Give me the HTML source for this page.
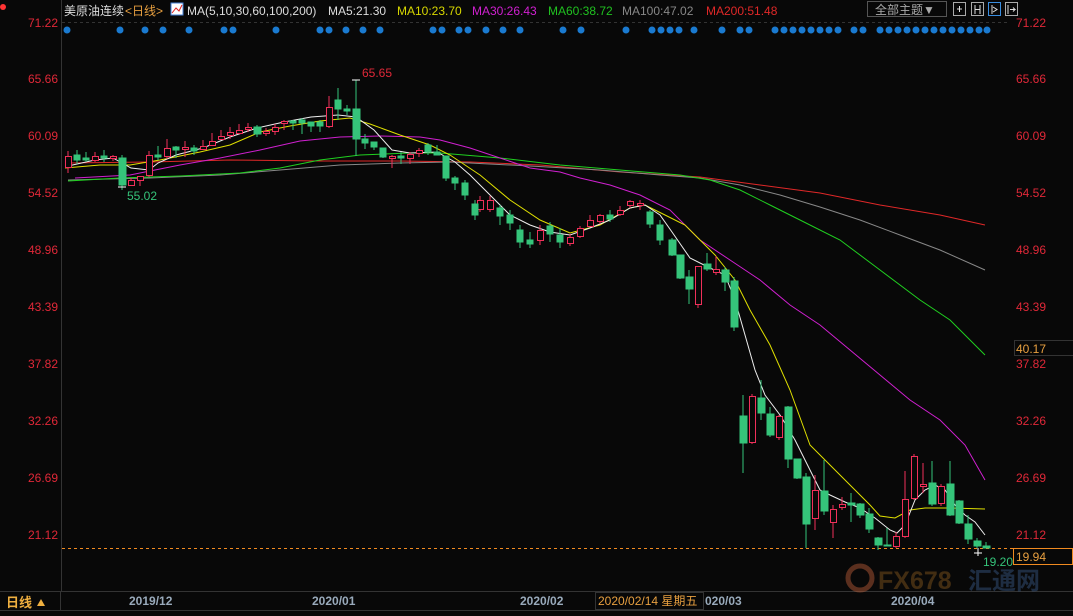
<!DOCTYPE html><html><head><meta charset="utf-8"><style>
body{margin:0;background:#080808;width:1073px;height:616px;overflow:hidden;font-family:"Liberation Sans","Noto Sans CJK SC",sans-serif}
svg{display:block}
</style></head><body>
<svg width="1073" height="616" xmlns="http://www.w3.org/2000/svg" font-family="Liberation Sans, Noto Sans CJK SC, sans-serif">
<rect width="1073" height="616" fill="#080808"/>
<line x1="61.5" y1="0" x2="61.5" y2="591" stroke="#333"/>
<line x1="0" y1="591.5" x2="1073" y2="591.5" stroke="#333"/>
<line x1="0" y1="610.5" x2="1073" y2="610.5" stroke="#333"/>
<line x1="62" y1="22.5" x2="1010" y2="22.5" stroke="#333" stroke-dasharray="3,3"/>
<circle cx="3" cy="7" r="3" fill="#f33"/>
<text x="64" y="15" font-size="12" fill="#ddd">美原油连续</text>
<text x="125" y="15" font-size="12" fill="#e8a040">&lt;日线&gt;</text>
<rect x="171" y="3" width="12" height="12" fill="#fff" stroke="#4682d8"/>
<polyline points="172,13 176,8 179,11 182,5" fill="none" stroke="#d22" stroke-width="1"/>
<text x="187" y="15" font-size="12" fill="#ddd">MA(5,10,30,60,100,200)</text>
<text x="328" y="15" font-size="12" fill="#ddd">MA5:21.30</text>
<text x="397" y="15" font-size="12" fill="#d8d800">MA10:23.70</text>
<text x="472" y="15" font-size="12" fill="#d020d0">MA30:26.43</text>
<text x="548" y="15" font-size="12" fill="#20c020">MA60:38.72</text>
<text x="622" y="15" font-size="12" fill="#888">MA100:47.02</text>
<text x="706" y="15" font-size="12" fill="#e02828">MA200:51.48</text>
<rect x="867.5" y="1.5" width="79" height="15" fill="none" stroke="#555"/>
<text x="875" y="14" font-size="12" fill="#aaa">全部主题▼</text>
<rect x="953.5" y="2.5" width="12" height="13" fill="none" stroke="#aaa"/>
<rect x="971.5" y="2.5" width="12" height="13" fill="none" stroke="#aaa"/>
<rect x="988.5" y="2.5" width="12" height="13" fill="none" stroke="#3a8ee0"/>
<rect x="1005.5" y="2.5" width="12" height="13" fill="none" stroke="#aaa"/>
<path d="M957 9h5M959.5 6v6M975 5v9M980 5v9M975 9.5h5M992 5v9M993 7l4 2.5-4 2.5M1008 5v9M1010 9.5h5l-2-2M1015 9.5l-2 2" stroke="#ddd" fill="none"/>
<g font-size="12" fill="#e02838" text-anchor="end">
<text x="58" y="27">71.22</text><text x="58" y="83">65.66</text><text x="58" y="140">60.09</text><text x="58" y="197">54.52</text><text x="58" y="254">48.96</text><text x="58" y="311">43.39</text><text x="58" y="368">37.82</text><text x="58" y="425">32.26</text><text x="58" y="482">26.69</text><text x="58" y="539">21.12</text>
</g>
<g font-size="12" fill="#e02838">
<text x="1016" y="27">71.22</text><text x="1016" y="83">65.66</text><text x="1016" y="140">60.09</text><text x="1016" y="197">54.52</text><text x="1016" y="254">48.96</text><text x="1016" y="311">43.39</text><text x="1016" y="368">37.82</text><text x="1016" y="425">32.26</text><text x="1016" y="482">26.69</text><text x="1016" y="539">21.12</text>
</g>
<rect x="1014.5" y="340.5" width="59" height="15" fill="#080808" stroke="#333"/>
<text x="1016" y="353" font-size="12" fill="#e8a040">40.17</text>
<line x1="62" y1="548.5" x2="1013" y2="548.5" stroke="#f08a20" stroke-dasharray="3,3"/>
<rect x="1013.5" y="548.5" width="59" height="16" fill="#080808" stroke="#f08a20"/>
<text x="1016" y="561" font-size="12" fill="#e8a040">19.94</text>
<g fill="#1a7ad0">
<circle cx="67" cy="30" r="3.5"/><circle cx="120" cy="30" r="3.5"/><circle cx="145" cy="30" r="3.5"/><circle cx="163" cy="30" r="3.5"/><circle cx="189" cy="30" r="3.5"/><circle cx="224" cy="30" r="3.5"/><circle cx="233" cy="30" r="3.5"/><circle cx="276" cy="30" r="3.5"/><circle cx="320" cy="30" r="3.5"/><circle cx="329" cy="30" r="3.5"/><circle cx="346" cy="30" r="3.5"/><circle cx="363" cy="30" r="3.5"/><circle cx="380" cy="30" r="3.5"/><circle cx="433" cy="30" r="3.5"/><circle cx="442" cy="30" r="3.5"/><circle cx="459" cy="30" r="3.5"/><circle cx="468" cy="30" r="3.5"/><circle cx="486" cy="30" r="3.5"/><circle cx="503" cy="30" r="3.5"/><circle cx="520" cy="30" r="3.5"/>
<circle cx="563" cy="30" r="3.5"/><circle cx="581" cy="30" r="3.5"/><circle cx="626" cy="30" r="3.5"/><circle cx="652" cy="30" r="3.5"/><circle cx="661" cy="30" r="3.5"/><circle cx="670" cy="30" r="3.5"/><circle cx="679" cy="30" r="3.5"/><circle cx="694" cy="30" r="3.5"/><circle cx="722" cy="30" r="3.5"/><circle cx="740" cy="30" r="3.5"/><circle cx="749" cy="30" r="3.5"/>
<circle cx="775" cy="30" r="3.5"/><circle cx="784" cy="30" r="3.5"/><circle cx="793" cy="30" r="3.5"/><circle cx="802" cy="30" r="3.5"/><circle cx="811" cy="30" r="3.5"/><circle cx="820" cy="30" r="3.5"/><circle cx="829" cy="30" r="3.5"/><circle cx="838" cy="30" r="3.5"/><circle cx="854" cy="30" r="3.5"/><circle cx="863" cy="30" r="3.5"/>
<circle cx="880" cy="30" r="3.5"/><circle cx="889" cy="30" r="3.5"/><circle cx="898" cy="30" r="3.5"/><circle cx="907" cy="30" r="3.5"/><circle cx="916" cy="30" r="3.5"/><circle cx="925" cy="30" r="3.5"/><circle cx="934" cy="30" r="3.5"/><circle cx="943" cy="30" r="3.5"/><circle cx="952" cy="30" r="3.5"/><circle cx="961" cy="30" r="3.5"/><circle cx="970" cy="30" r="3.5"/><circle cx="979" cy="30" r="3.5"/><circle cx="987" cy="30" r="3.5"/>
</g>
<g fill="none" stroke-width="1">
<polyline stroke="#e02828" points="68,163 150,162 230,160 320,161 400,161 470,162 540,165 620,172 700,177 760,185 820,193 880,205 940,215 985,225"/>
<polyline stroke="#888" points="68,180 150,178 220,175 280,170 340,165 400,163 450,162 530,166 600,170 660,175 700,178 740,185 780,195 820,207 860,220 900,235 940,250 985,270"/>
<polyline stroke="#20d020" points="68,181 120,178 180,176 240,173 280,168 320,160 360,155 410,153 440,153 500,158 560,165 620,170 680,175 710,180 740,190 770,205 800,220 840,240 880,270 920,300 950,320 985,355"/>
<polyline stroke="#d020d0" points="75,178 130,175 180,165 220,158 260,150 300,141 340,137 380,136 420,137 440,140 470,148 500,158 530,168 560,172 580,178 610,185 640,195 670,210 700,240 730,260 760,280 790,305 820,325 850,350 880,375 910,400 940,420 965,445 985,480"/>
<polyline stroke="#e0e000" points="65,168 100,165 130,165 160,160 200,152 230,145 260,132 290,126 320,121 350,118 370,124 400,135 430,145 450,155 480,175 510,200 540,220 570,233 600,225 630,208 645,205 665,215 685,225 700,240 715,255 735,280 750,310 770,345 790,390 810,445 825,460 840,475 855,490 870,505 880,516 895,518 910,510 925,508 950,508 985,509"/>
<polyline stroke="#eee" points="68,166 95,160 113,158 131,168 149,170 158,163 176,155 203,148 230,137 257,128 284,122 311,117 338,115 356,117 374,130 392,150 410,153 437,152 455,162 470,175 490,195 510,215 530,225 550,232 570,235 590,228 610,220 630,208 645,205 660,215 672,232 690,258 708,267 725,275 735,300 745,335 755,370 765,395 780,415 795,440 810,470 820,490 830,495 845,502 860,508 875,518 890,530 897,533 905,525 915,500 925,490 935,485 945,490 955,505 965,515 975,522 985,535"/>
</g>
<g stroke="#f0305a" fill="#080808" stroke-width="1">
<path d="M68 151v22M95 152v10M113 155v6M131 178v8M140 176v10M149 151v26M167 139v20M185 141v16M203 140v9M212 133v13M221 130v10M230 127v12M239 124v10M248 123v9M266 128v8M275 124v11M284 120v10M329 96v32M392 155v13M410 152v12M419 148v9M480 196v16M490 196v16M540 225v20M570 234v12M580 226v12M590 215v12M600 214v10M620 206v10M630 200v8M640 200v10M698 266v42M716 256v19M752 394v50M779 415v25M815 475v55M833 505v33M842 497v13M896 532v16M905 471v67M914 454v46M923 463v30M941 484v22"/>
<rect x="65.5" y="156.5" width="6" height="11"/><rect x="92.5" y="156.5" width="6" height="4"/><rect x="110.5" y="156.5" width="6" height="2"/><rect x="128.5" y="180.5" width="6" height="5"/><rect x="137.5" y="176.5" width="6" height="4"/><rect x="146.5" y="155.5" width="6" height="20"/><rect x="164.5" y="148.5" width="6" height="8"/><rect x="182.5" y="147.5" width="6" height="2"/><rect x="200.5" y="146.5" width="6" height="3"/><rect x="209.5" y="141.5" width="6" height="4"/><rect x="218.5" y="136.5" width="6" height="3"/><rect x="227.5" y="132.5" width="6" height="3"/><rect x="236.5" y="130.5" width="6" height="3"/><rect x="245.5" y="127.5" width="6" height="2"/><rect x="263.5" y="131.5" width="6" height="2"/><rect x="272.5" y="127.5" width="6" height="4"/><rect x="281.5" y="121.5" width="6" height="2"/><rect x="326.5" y="107.5" width="6" height="19"/><rect x="389.5" y="156.5" width="6" height="2"/><rect x="407.5" y="154.5" width="6" height="4"/><rect x="416.5" y="150.5" width="6" height="3"/><rect x="477.5" y="200.5" width="6" height="9"/><rect x="487.5" y="200.5" width="6" height="9"/><rect x="537.5" y="230.5" width="6" height="10"/><rect x="567.5" y="237.5" width="6" height="6"/><rect x="577.5" y="228.5" width="6" height="8"/><rect x="587.5" y="220.5" width="6" height="6"/><rect x="597.5" y="215.5" width="6" height="6"/><rect x="617.5" y="210.5" width="6" height="4"/><rect x="627.5" y="201.5" width="6" height="4"/><rect x="637.5" y="203.5" width="6" height="2"/><rect x="695.5" y="266.5" width="6" height="38"/><rect x="713.5" y="269.5" width="6" height="3"/><rect x="749.5" y="396.5" width="6" height="46"/><rect x="776.5" y="416.5" width="6" height="21"/><rect x="812.5" y="490.5" width="6" height="28"/><rect x="830.5" y="509.5" width="6" height="13"/><rect x="839.5" y="504.5" width="6" height="3"/><rect x="893.5" y="536.5" width="6" height="10"/><rect x="902.5" y="499.5" width="6" height="37"/><rect x="911.5" y="456.5" width="6" height="42"/><rect x="920.5" y="484.5" width="6" height="2"/><rect x="938.5" y="486.5" width="6" height="17"/>
</g>
<g stroke="#35c47a" fill="#35c47a" stroke-width="1">
<path d="M77 150v14M86 152v10M104 150v12M122 155v35M158 146v14M176 146v12M194 145v10M257 125v12M293 120v10M302 118v16M311 122v10M320 120v12M338 88v32M347 105v10M356 80v76M365 134v15M374 142v8M383 148v10M401 152v12M428 143v12M437 145v10M446 156v25M455 176v14M465 180v20M475 200v20M500 205v20M510 210v20M520 225v23M530 232v16M550 222v20M560 228v20M610 210v12M650 210v18M660 220v25M672 238v18M680 255v24M689 270v34M707 253v18M725 267v24M734 277v54M743 395v78M761 380v40M770 407v30M788 406v62M797 459v20M806 473v75M824 460v55M851 493v29M860 503v15M869 508v25M878 537v13M887 528v18M932 461v45M950 461v55M959 500v24M968 515v29M977 538v10M986 542v6"/>
<rect x="74" y="155" width="6" height="5"/><rect x="83" y="158" width="6" height="2"/><rect x="101" y="156" width="6" height="2"/><rect x="119" y="158" width="7" height="27"/><rect x="155" y="155" width="6" height="2"/><rect x="173" y="147" width="6" height="3"/><rect x="191" y="148" width="6" height="3"/><rect x="254" y="127" width="7" height="7"/><rect x="290" y="121" width="6" height="2"/><rect x="299" y="120" width="6" height="3"/><rect x="308" y="122" width="6" height="4"/><rect x="317" y="122" width="6" height="4"/><rect x="335" y="100" width="6" height="9"/><rect x="344" y="109" width="6" height="2"/><rect x="353" y="109" width="7" height="30"/><rect x="362" y="139" width="6" height="4"/><rect x="371" y="142" width="6" height="5"/><rect x="380" y="148" width="6" height="9"/><rect x="398" y="156" width="6" height="2"/><rect x="425" y="145" width="6" height="7"/><rect x="434" y="152" width="6" height="3"/><rect x="443" y="156" width="6" height="22"/><rect x="452" y="178" width="6" height="5"/><rect x="462" y="183" width="6" height="12"/><rect x="472" y="204" width="6" height="11"/><rect x="497" y="208" width="6" height="8"/><rect x="507" y="215" width="6" height="8"/><rect x="517" y="230" width="6" height="12"/><rect x="527" y="240" width="6" height="4"/><rect x="547" y="226" width="6" height="8"/><rect x="557" y="235" width="6" height="7"/><rect x="607" y="215" width="6" height="4"/><rect x="647" y="212" width="6" height="12"/><rect x="657" y="225" width="6" height="15"/><rect x="669" y="240" width="7" height="15"/><rect x="677" y="255" width="7" height="23"/><rect x="686" y="277" width="7" height="12"/><rect x="704" y="264" width="7" height="5"/><rect x="722" y="270" width="7" height="12"/><rect x="731" y="281" width="7" height="46"/><rect x="740" y="416" width="7" height="27"/><rect x="758" y="398" width="7" height="15"/><rect x="767" y="414" width="7" height="21"/><rect x="785" y="407" width="7" height="52"/><rect x="794" y="459" width="7" height="19"/><rect x="803" y="477" width="7" height="47"/><rect x="821" y="491" width="7" height="20"/><rect x="848" y="503" width="7" height="2"/><rect x="857" y="504" width="7" height="11"/><rect x="866" y="514" width="7" height="15"/><rect x="875" y="538" width="7" height="7"/><rect x="884" y="545" width="7" height="1"/><rect x="929" y="483" width="7" height="21"/><rect x="947" y="484" width="7" height="31"/><rect x="956" y="501" width="7" height="22"/><rect x="965" y="524" width="7" height="15"/><rect x="974" y="541" width="7" height="5"/><rect x="983" y="546" width="7" height="2"/>
</g>
<path d="M352 80h8M118 187h8M974 553h8M978 548v8" stroke="#fff"/>
<text x="362" y="77" font-size="12" fill="#e02838">65.65</text>
<text x="127" y="200" font-size="12" fill="#35c47a">55.02</text>
<text x="983" y="566" font-size="12" fill="#35c47a">19.20</text>
<g opacity="0.45">
<circle cx="860" cy="578" r="12" fill="none" stroke="#c0603a" stroke-width="5"/>
<text x="878" y="589" font-size="25" font-weight="bold" fill="#8a5a20">FX678</text>
<text x="968" y="589" font-size="24" font-weight="bold" fill="#3a5a8a">汇通网</text>
</g>
<text x="6" y="607" font-size="13" fill="#f0b040" font-weight="bold">日线</text>
<path d="M37 606l4-7 4 7z" fill="#f0b040"/>
<line x1="60.5" y1="592" x2="60.5" y2="610" stroke="#333"/>
<g font-size="12" fill="#9ab" font-weight="bold">
<text x="129" y="605">2019/12</text><text x="312" y="605">2020/01</text><text x="520" y="605">2020/02</text><text x="891" y="605">2020/04</text>
</g>
<rect x="595.5" y="592.5" width="108" height="17" fill="#080808" stroke="#333"/>
<text x="598" y="605" font-size="12" fill="#e8a040">2020/02/14 星期五</text>
<text x="705" y="605" font-size="12" fill="#9ab" font-weight="bold">020/03</text>
</svg>
</body></html>
